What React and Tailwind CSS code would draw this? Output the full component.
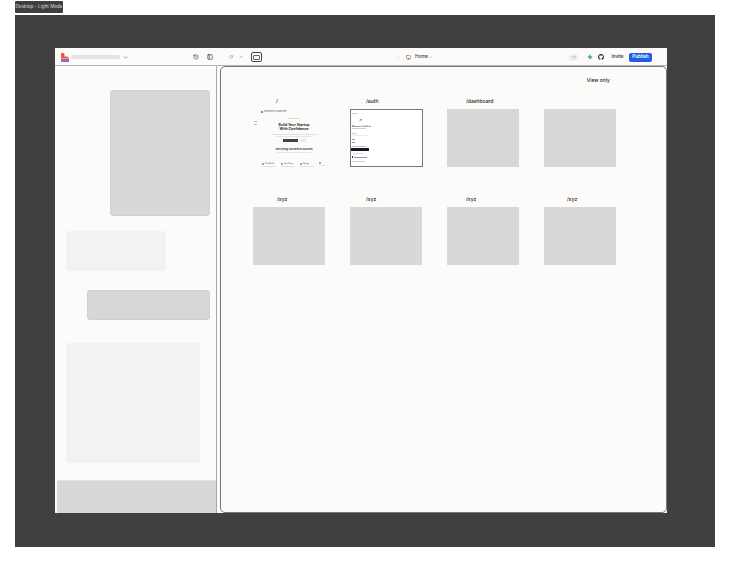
import { ChevronDown, ChevronLeft, Code, History, Monitor, PanelLeft, RotateCw, ArrowUpRight, Zap } from 'lucide-react'
import { FaGithub } from 'react-icons/fa'

const font = 'font-["Inter",sans-serif]'

const pages = [
  { label: '/', labelClass: 'ml-[23px]', thumb: 'home' },
  { label: '/auth', labelClass: 'ml-[16px]', thumb: 'auth' },
  { label: '/dashboard', labelClass: 'ml-[19px]' },
  { label: '', labelClass: '' },
  { label: '/xyz', labelClass: 'ml-[24px]' },
  { label: '/xyz', labelClass: 'ml-[16px]', split: true },
  { label: '/xyz', labelClass: 'ml-[19px]' },
  { label: '/xyz', labelClass: 'ml-[23px]' },
]

function Feature({ title }) {
  return (
    <div className="w-[15px]">
      <div className="flex items-center gap-[1px] whitespace-nowrap text-[1.8px] leading-[3px] text-[#444]">
        <span className="h-[2px] w-[2px] shrink-0 rounded-[1px] bg-[#888]" />
        {title}
      </div>
      <div className="mt-[1px] h-px w-[14px] bg-[#e2e2e2]" />
      <div className="mt-px h-px w-[11px] bg-[#e8e8e8]" />
    </div>
  )
}

function HomeThumb() {
  return (
    <div className="relative h-[58px] w-[72px] overflow-hidden bg-[#fcfbf9]">
      <div className="flex items-center gap-[1px] whitespace-nowrap pl-[8px] pt-[1px] text-[2.1px] leading-[3px] text-[#555]">
        <span className="h-[2px] w-[2px] bg-[#888]" />
        Welcome to CodeCraft
      </div>
      <div className="pl-[10px] text-center">
        <div className="mx-auto mt-[5px] h-px w-[12px] bg-[#ddd]" />
        <div className="mt-[4px] text-[3.5px] font-bold leading-[4px] text-[#2b2b2b]">
          Build Your Startup
          <br />
          With Confidence
        </div>
        <div className="mx-auto mt-[3px] h-px w-[46px] bg-[#e0e0e0]" />
        <div className="mx-auto mt-px h-px w-[38px] bg-[#e6e6e6]" />
        <div className="mt-[2px] flex items-center justify-center gap-[3px]">
          <span className="h-[3px] w-[15px] bg-[#444]" />
          <span className="h-[3px] w-[5px] bg-[#e8e8e8]" />
        </div>
        <div className="mt-[6px] whitespace-nowrap text-[2.3px] font-bold leading-[3px] text-[#333]">Everything You Need to Succeed</div>
        <div className="mx-auto mt-px h-px w-[34px] bg-[#e6e6e6]" />
      </div>
      <div className="mt-[9px] flex gap-[5px] pl-[9px] text-left">
        <Feature title="Fast Builds" />
        <Feature title="Test Suites" />
        <Feature title="Design" />
        <Feature title="" />
      </div>
      <div className="absolute left-0 top-[12px] flex flex-col gap-[2px] pl-[1px]">
        <span className="h-px w-[3px] bg-[#bbb]" />
        <span className="h-px w-[3px] bg-[#bbb]" />
      </div>
    </div>
  )
}

function AuthThumb() {
  return (
    <div className="h-[58px] w-[73px] border border-[#777] bg-white">
      <div className="flex h-full w-[19px] flex-col pt-[3px] text-[1.7px] leading-[2px] text-[#444]">
        <span className="ml-px h-px w-[6px] bg-[#d0d0d0]" />
        <span className="mx-auto mt-[5px] text-[4px] leading-[4px]">↗</span>
        <div className="mt-[2px] whitespace-nowrap pl-px font-bold">Welcome to CodeCraft</div>
        <span className="ml-px mt-[1px] h-px w-[14px] bg-[#d0d0d0]" />
        <span className="ml-px mt-[4px] h-px w-[5px] bg-[#d0d0d0]" />
        <span className="ml-px mt-px h-px w-[17px] bg-[#eee]" />
        <span className="ml-px mt-[3px] h-px w-[3px] bg-[#999]" />
        <span className="ml-px mt-[2px] h-px w-[3px] bg-[#999]" />
        <span className="ml-px mt-[3px] h-px w-[14px] bg-[#c0c0c0]" />
        <span className="mt-px h-[3px] w-[18px] bg-[#17172a]" />
        <span className="ml-[2px] mt-[2px] h-px w-[10px] bg-[#ddd]" />
        <div className="ml-px mt-[2px] flex items-center gap-[1px]">
          <span className="h-[2px] w-[1px] bg-[#333]" />
          <span className="h-px w-[13px] bg-[#999]" />
        </div>
        <span className="ml-px mt-[3px] h-px w-[13px] bg-[#d0d0d0]" />
      </div>
    </div>
  )
}

function PageCard({ page }) {
  return (
    <div className="flex h-[68px] flex-col">
      <div className={`h-[10px] text-[5px] font-medium leading-[5px] text-[#222] ${page.labelClass}`}>{page.label}</div>
      {page.thumb === 'home' && <HomeThumb />}
      {page.thumb === 'auth' && <AuthThumb />}
      {!page.thumb && (
        <div className="h-[58px] w-[72px] bg-[#d8d8d7]">
          {page.split && <div className="h-full w-[15px] border-r border-[#d6d6d5]" />}
        </div>
      )}
    </div>
  )
}

function TopBar() {
  return (
    <div className="flex h-[18px] shrink-0 items-center border-b border-[#b5b5b3] bg-[#fcfbf9] pt-px text-[#333]">
      <div className="flex w-[166px] shrink-0 items-center pl-[6px]">
        <svg viewBox="0 0 8 9" className="h-[9px] w-[8px]">
          <path d="M0 0h2.5c.7 0 1 .5 1 1.5V3.5H6c1 0 2 1 2 2.5H0z" fill="#ef5a3a" />
          <path d="M0 5h8v1H0z" fill="#f29a3c" />
          <path d="M0 6h8v3H0z" fill="#9b5fd6" />
        </svg>
        <span className="ml-[2px] h-[4px] w-[49px] rounded-full bg-[#e3e3e1]" />
        <ChevronDown className="ml-[3px] h-[5px] w-[5px]" strokeWidth={2.5} />
        <History className="ml-[65px] h-[6px] w-[6px]" strokeWidth={2} />
        <PanelLeft className="ml-[8px] h-[6px] w-[6px]" strokeWidth={2.5} />
      </div>
      <RotateCw className="ml-[8px] h-[4px] w-[4px] text-[#666]" strokeWidth={2} />
      <ArrowUpRight className="ml-[6px] h-[4px] w-[4px] text-[#888]" strokeWidth={2} />
      <span className="ml-[8px] flex h-[10px] w-[11px] items-center justify-center rounded-[2px] border border-[#444]">
        <span className="h-[5px] w-[7px] rounded-[1px] border border-[#666]" />
      </span>
      <ChevronLeft className="ml-[134px] h-[4px] w-[4px] text-[#aaa]" strokeWidth={2} />
      <Monitor className="ml-[6px] h-[5px] w-[5px] text-[#444]" strokeWidth={2} />
      <span className={`ml-[4px] mt-px w-[12px] text-[4.6px] font-medium leading-none text-[#444] ${font}`}>Home</span>
      <ChevronDown className="ml-[2px] h-[4px] w-[4px] text-[#666]" strokeWidth={2} />
      <span className="ml-[136px] flex h-[7px] w-[9px] items-center justify-center rounded-[1px] bg-[#f2f1ef]">
        <Code className="h-[4px] w-[4px] text-[#555]" strokeWidth={2.5} />
      </span>
      <Zap className="ml-[9px] h-[6px] w-[6px] text-[#2fa27a]" fill="#2fa27a" strokeWidth={1} />
      <FaGithub className="ml-[5px] h-[6px] w-[6px] text-[#222]" />
      <span className={`ml-[7px] flex h-[9px] w-[13px] items-center justify-center text-[4.6px] font-semibold leading-none text-[#444] ${font}`}>Invite</span>
      <span className={`ml-[5px] flex h-[9px] w-[23px] items-center justify-center rounded-[2px] bg-[#1d5fe0] text-[4.6px] font-semibold leading-none text-white ${font}`}>Publish</span>
    </div>
  )
}

function Sidebar() {
  return (
    <div className="flex w-[162px] shrink-0 flex-col border-r border-[#aaa] bg-[#fcfbf9]">
      <div className="flex flex-1 flex-col pt-[24px]">
        <div className="ml-[55px] h-[126px] w-[100px] rounded-[3px] border border-[#d0d0cf] bg-[#d7d7d6]" />
        <div className="ml-[11px] mt-[15px] h-[40px] w-[100px] rounded-[3px] bg-[#f4f2f0]" />
        <div className="ml-[32px] mt-[19px] h-[30px] w-[123px] rounded-[3px] border border-[#cfcfce] bg-[#d7d7d6]" />
        <div className="ml-[11px] mt-[23px] h-[120px] w-[134px] rounded-[3px] bg-[#f4f2f0]" />
      </div>
      <div className="ml-[2px] h-[33px] border-t border-[#e4e4e2] bg-[#d8d8d8]" />
    </div>
  )
}

function Canvas() {
  return (
    <div className="ml-[3px] flex-1 rounded-[5px] border border-[#777] bg-[#fcfbf9]">
      <div className={`flex h-[32px] items-start justify-end pr-[56px] pt-[9px] text-[5px] font-medium leading-[8px] text-[#222] ${font}`}>
        View only
      </div>
      <div className={`ml-[32px] grid w-[363px] grid-cols-[72px_72px_72px_72px] gap-x-[25px] gap-y-[30px] ${font}`}>
        {pages.map((page, i) => (
          <PageCard key={i} page={page} />
        ))}
      </div>
    </div>
  )
}

export default function App() {
  return (
    <div className={`h-[562px] w-[730px] overflow-hidden bg-white pt-px ${font}`}>
      <div className="ml-[15px] flex h-[12px] w-[48px] items-center justify-center whitespace-nowrap rounded-[1px] bg-[#3f3f3f] text-[4.6px] leading-none text-[#ddd]">
        Desktop - Light Mode
      </div>
      <div className="ml-[15px] mt-[2px] h-[532px] w-[700px] bg-[#404040] pl-[40px] pt-[33px]">
        <div className="flex h-[465px] w-[612px] flex-col bg-[#fcfbf9]">
          <TopBar />
          <div className="flex min-h-0 flex-1">
            <Sidebar />
            <Canvas />
          </div>
        </div>
      </div>
    </div>
  )
}
